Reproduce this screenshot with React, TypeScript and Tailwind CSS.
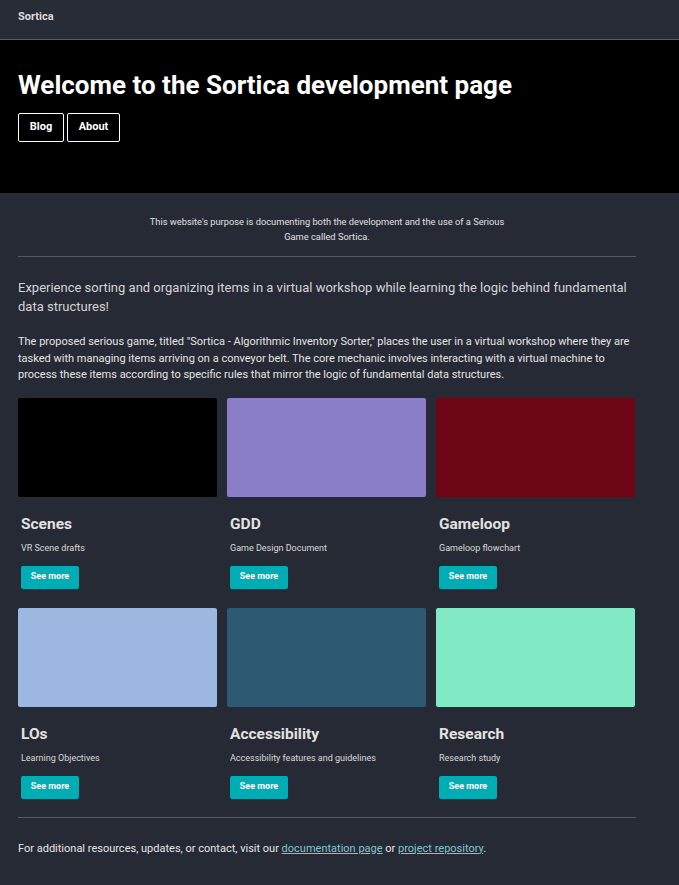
import React from 'react';

const cards = [
  { title: "Scenes", desc: "VR Scene drafts", color: "bg-[#000000]" },
  { title: "GDD", desc: "Game Design Document", color: "bg-[#8a7fc6]" },
  { title: "Gameloop", desc: "Gameloop flowchart", color: "bg-[#6d0716]" },
  { title: "LOs", desc: "Learning Objectives", color: "bg-[#9db8e0]" },
  { title: "Accessibility", desc: "Accessibility features and guidelines", color: "bg-[#2d5a72]" },
  { title: "Research", desc: "Research study", color: "bg-[#81e9c6]" },
];

const App = () => {
  return (
    <div className="min-h-[885px] bg-[#262a35] font-['Roboto',sans-serif] text-[#e6e6e6]">
      <header className="h-10 border-b border-[#5a5e68] bg-[#282c37] px-[18px] pt-[10px]">
        <div className="text-[11px] font-bold leading-[13px] text-[#dcdcdc]">Sortica</div>
      </header>

      <section className="h-[153px] bg-black px-[18px] pt-[29px]">
        <h1 className="text-[26px] font-bold leading-[32px] text-white">Welcome to the Sortica development page</h1>
        <div className="mt-[12px] flex gap-[3px]">
          <button className="h-[29px] w-[46px] rounded-[2px] border border-white text-[11px] font-bold text-white">Blog</button>
          <button className="h-[29px] w-[53px] rounded-[2px] border border-white text-[11px] font-bold text-white">About</button>
        </div>
      </section>

      <main className="ml-[18px] w-[618px] pt-[21px]">
        <p className="mx-auto w-[366px] text-center text-[9.3px] leading-[15px] text-[#e0e0e0]">
          This website&apos;s purpose is documenting both the development and the use of a Serious Game called Sortica.
        </p>
        <hr className="mt-[12px] border-[#55595f]" />

        <p className="mt-[21px] text-[13px] leading-[19px] text-[#d4d4d4]">
          Experience sorting and organizing items in a virtual workshop while learning the logic behind fundamental data structures!
        </p>
        <p className="mt-[18px] text-[11px] leading-[16.5px] text-[#e4e4e4]">
          The proposed serious game, titled &quot;Sortica - Algorithmic Inventory Sorter,&quot; places the user in a virtual workshop where they are tasked with managing items arriving on a conveyor belt. The core mechanic involves interacting with a virtual machine to process these items according to specific rules that mirror the logic of fundamental data structures.
        </p>

        <div className="mt-[14px] grid grid-cols-[199px_199px_199px] gap-x-[10px] gap-y-[19px]">
          {cards.map((card) => (
            <div key={card.title}>
              <div className={`h-[99px] rounded-[2px] ${card.color}`} />
              <div className="px-[3px]">
                <h3 className="mt-[17px] text-[15.5px] font-bold leading-[20px] text-[#e2e2e2]">{card.title}</h3>
                <p className="mt-[8px] text-[9px] leading-[12px] text-[#dadada]">{card.desc}</p>
                <button className="mt-[12px] h-[23px] w-[58px] rounded-[2px] bg-[#00adb5] text-[9px] font-bold text-white">
                  See more
                </button>
              </div>
            </div>
          ))}
        </div>

        <hr className="mt-[18px] border-[#55595f]" />
        <p className="mt-[23px] text-[11px] text-[#e4e4e4]">
          For additional resources, updates, or contact, visit our{' '}
          <a href="#" className="text-[#7fc8c9] underline">documentation page</a> or{' '}
          <a href="#" className="text-[#7fc8c9] underline">project repository</a>.
        </p>
      </main>
    </div>
  );
};

export default App;
